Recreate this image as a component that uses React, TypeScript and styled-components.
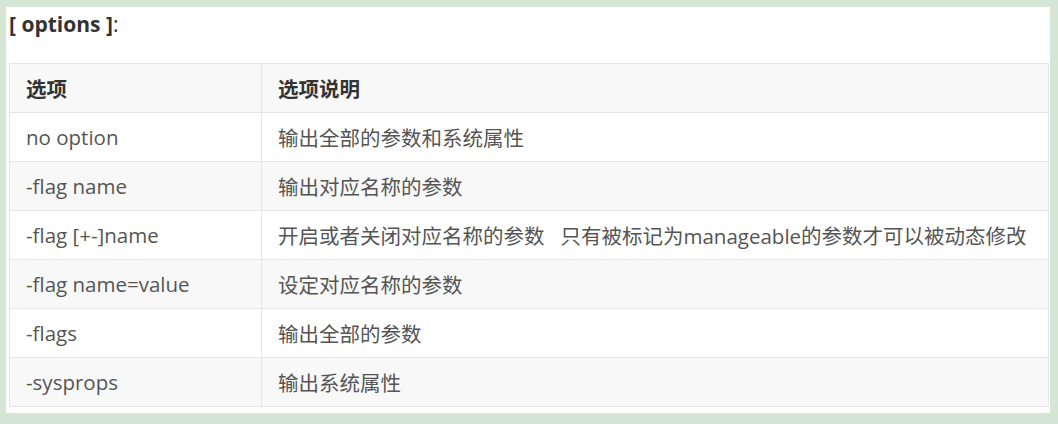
import React from "react";
import styled, { createGlobalStyle } from "styled-components";

const Global = createGlobalStyle`
  html, body {
    margin: 0;
    padding: 0;
    background: #d5e6d5;
  }
  body {
    font-family: "Open Sans", "Noto Sans CJK SC", sans-serif;
  }
`;

const Panel = styled.div`
  box-sizing: border-box;
  margin: 7px 8px 0 6px;
  width: 1044px;
  height: 406px;
  background: #ffffff;
  padding: 3px 1px 0 3px;
`;

const Title = styled.div`
  font-size: 21px;
  line-height: 28px;
  color: #333333;
  margin-bottom: 25px;
  strong {
    font-weight: 700;
  }
`;

const Table = styled.table`
  width: 1040px;
  border-collapse: collapse;
  table-layout: fixed;
  border: 1px solid #e6e6e6;
`;

const Row = styled.tr<{ $shaded: boolean }>`
  background: ${(p) => (p.$shaded ? "#f8f8f8" : "#ffffff")};
`;

const HeadCell = styled.th<{ $w?: number }>`
  box-sizing: border-box;
  ${(p) => (p.$w ? `width: ${p.$w}px;` : "")}
  height: 49px;
  padding: 0 16px;
  text-align: left;
  font-size: 20.5px;
  font-weight: 700;
  color: #333333;
  border: 1px solid #e6e6e6;
`;

const Cell = styled.td`
  box-sizing: border-box;
  height: 49px;
  padding: 0 16px;
  font-size: 20.5px;
  color: #555555;
  border: 1px solid #e6e6e6;
  white-space: pre;
`;

const rows: [string, string][] = [
  ["no option", "输出全部的参数和系统属性"],
  ["-flag name", "输出对应名称的参数"],
  ["-flag [+-]name", "开启或者关闭对应名称的参数   只有被标记为manageable的参数才可以被动态修改"],
  ["-flag name=value", "设定对应名称的参数"],
  ["-flags", "输出全部的参数"],
  ["-sysprops", "输出系统属性"],
];

export default function App() {
  return (
    <>
      <Global />
      <Panel>
        <Title>
          <strong>[ options ]</strong>:
        </Title>
        <Table>
          <thead>
            <Row $shaded>
              <HeadCell $w={252}>选项</HeadCell>
              <HeadCell>选项说明</HeadCell>
            </Row>
          </thead>
          <tbody>
            {rows.map(([opt, desc], i) => (
              <Row key={opt} $shaded={i % 2 === 1}>
                <Cell>{opt}</Cell>
                <Cell>{desc}</Cell>
              </Row>
            ))}
          </tbody>
        </Table>
      </Panel>
    </>
  );
}
